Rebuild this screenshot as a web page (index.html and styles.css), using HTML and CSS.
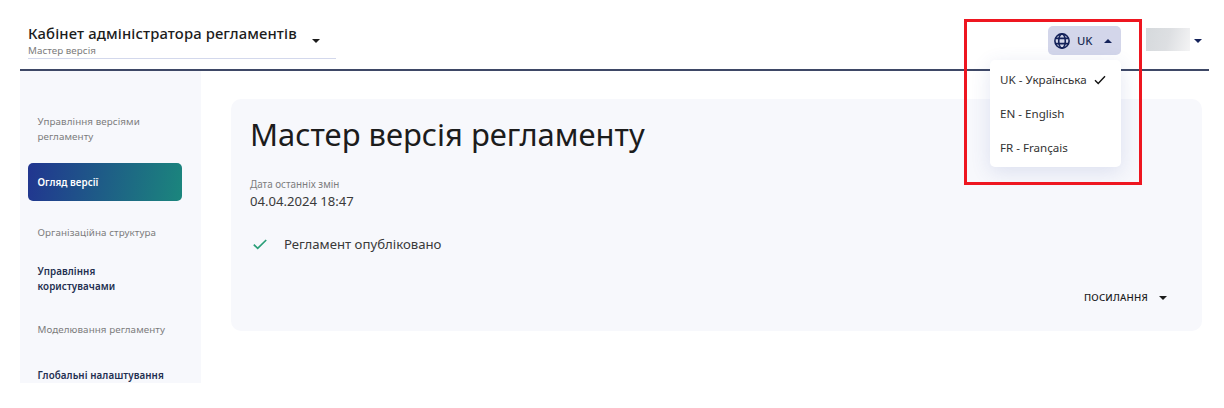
FILE: index.html
```html
<!DOCTYPE html>
<html lang="uk">
<head>
<meta charset="utf-8">
<title>Кабінет адміністратора регламентів</title>
<link rel="stylesheet" href="styles.css">
</head>
<body>
<div class="app">
  <header class="header">
    <div class="cabinet">
      <div class="cabinet-text">
        <div class="cabinet-title">Кабінет адміністратора регламентів</div>
        <div class="cabinet-version">Мастер версія</div>
      </div>
      <svg class="caret" viewBox="0 0 8 4"><path d="M0 0h8L4 4z"/></svg>
    </div>
    <div class="header-actions">
      <div class="language">
        <button class="language-button">
          <svg class="globe" viewBox="0 0 16 16"><circle cx="8" cy="8" r="7.1"/><ellipse cx="8" cy="8" rx="3.3" ry="7.1"/><path d="M1.4 5.4h13.2M1.4 10.6h13.2"/></svg>
          <span class="language-code">UK</span>
          <svg class="caret" viewBox="0 0 8 4"><path d="M0 4h8L4 0z"/></svg>
        </button>
        <ul class="language-menu">
          <li><span>UK - Українська</span><svg class="menu-check" viewBox="0 0 12 10"><path d="M1 5.2l3.2 3.2L11 1.2"/></svg></li>
          <li><span>EN - English</span></li>
          <li><span>FR - Français</span></li>
        </ul>
        <div class="highlight"></div>
      </div>
      <div class="user">
        <span class="user-name"></span>
        <svg class="caret" viewBox="0 0 8 4"><path d="M0 0h8L4 4z"/></svg>
      </div>
    </div>
  </header>
  <div class="body">
    <nav class="sidebar">
      <div class="group group-first">Управління версіями регламенту</div>
      <a class="item item-active">Огляд версії</a>
      <div class="group group-structure">Організаційна структура</div>
      <a class="item item-users">Управління користувачами</a>
      <div class="group group-modeling">Моделювання регламенту</div>
      <a class="item item-global">Глобальні налаштування</a>
    </nav>
    <main class="card">
      <h1 class="title">Мастер версія регламенту</h1>
      <div class="date-label">Дата останніх змін</div>
      <div class="date-value">04.04.2024 18:47</div>
      <div class="status">
        <svg class="status-check" viewBox="0 0 14 11"><path d="M.8 5.6l3.9 3.8L13.2 1"/></svg>
        <span class="status-text">Регламент опубліковано</span>
      </div>
      <div class="links">
        <span class="links-text">ПОСИЛАННЯ</span>
        <svg class="caret" viewBox="0 0 8 4"><path d="M0 0h8L4 4z"/></svg>
      </div>
    </main>
  </div>
</div>
</body>
</html>
```
FILE: styles.css
```css
* { box-sizing: border-box; }
body { margin: 0; background: #fff; font-family: "Noto Sans", "Open Sans", sans-serif; color: #1c1c1c; }
.app { width: 1189px; height: 383px; margin-left: 20px; display: flex; flex-direction: column; }
.caret { width: 8px; height: 4px; fill: currentColor; flex: none; }
.header { height: 71px; flex: none; display: flex; justify-content: space-between; padding: 24px 7px 0 8px; border-bottom: 2px solid #3e4866; }
.cabinet { display: flex; justify-content: space-between; width: 308px; height: 35px; padding-right: 16px; border-bottom: 1px solid #d3d8ec; }
.cabinet .caret { margin-top: 15px; }
.cabinet-title { font-size: 14.8px; font-weight: 500; letter-spacing: .13px; line-height: 19px; white-space: nowrap; }
.cabinet-version { margin-top: 1px; font-size: 9.8px; letter-spacing: .04px; line-height: 14px; color: #7c7c7c; }
.header-actions { display: flex; margin-top: 2px; color: #14225a; }
.language { position: relative; width: 73px; height: 29px; margin-right: 25px; }
.language-button { display: flex; align-items: center; width: 73px; height: 29px; padding: 0 9px 0 6px; border: 0; border-radius: 5px; background: #d3d6ea; font-family: inherit; color: #14225a; }
.globe { width: 16px; height: 16px; fill: none; stroke: currentColor; stroke-width: 1.6; }
.language-code { font-size: 11.3px; font-weight: 500; line-height: 16px; margin: 1px auto 0 7px; color: #222e56; }
.language-menu { position: absolute; z-index: 2; top: 34px; right: 0; width: 131px; height: 107px; margin: 0; padding: 3px 0 0 10px; list-style: none; background: #fff; border-radius: 5px; box-shadow: 0 5px 20px rgba(60, 80, 160, .14); color: #333; }
.language-menu li { display: flex; align-items: center; height: 34px; font-size: 11.6px; line-height: 16px; white-space: nowrap; }
.menu-check { width: 12px; height: 10px; margin-left: 7px; fill: none; stroke: #111; stroke-width: 1.4; }
.highlight { position: absolute; z-index: 3; left: -84px; top: -7px; width: 178px; height: 166px; border: 3px solid #ee1620; }
.user { display: flex; }
.user-name { width: 44px; height: 23px; margin: 2px 4px 0 0; background: linear-gradient(105deg, #d5d9dc, #dddfe2 50%, #f4f4f5); }
.user .caret { margin-top: 13px; }
.body { flex: 1; min-height: 0; display: flex; align-items: flex-start; }
.sidebar { width: 181px; height: 312px; padding: 44px 19px 0 8px; background: #f7f8fc; overflow: hidden; font-size: 9.8px; letter-spacing: .08px; line-height: 14.5px; }
.group { padding-left: 9.5px; color: #7c7c7c; }
.item { display: block; padding-left: 9.5px; font-weight: 600; color: #232f50; }
.item-active { height: 38px; margin-top: 19px; letter-spacing: .05px; line-height: 39px; border-radius: 5px; background: linear-gradient(100deg, #213590, #1b867d); color: #fff; }
.group-structure { margin-top: 25px; }
.item-users { width: 110px; margin-top: 23px; line-height: 15px; }
.group-modeling { margin-top: 29px; }
.item-global { margin-top: 32px; }
.card { width: 971px; height: 232px; margin: 28px 0 0 30px; padding: 13px 35px 0 19px; border-radius: 10px; background: #f7f8fc; }
.title { margin: 0; font-size: 30.95px; font-weight: 400; line-height: 44px; }
.date-label { margin-top: 21px; font-size: 9.9px; line-height: 14px; color: #7c7c7c; }
.date-value { margin-top: 1px; font-size: 13.1px; line-height: 18px; color: #3a3a3a; }
.status { display: flex; align-items: center; height: 18px; margin-top: 25px; padding-left: 3px; }
.status-check { width: 14px; height: 11px; margin-right: 17px; fill: none; stroke: #2a9f78; stroke-width: 1.7; }
.status-text { font-size: 13.2px; line-height: 18px; color: #3a3a3a; }
.links { display: flex; align-items: center; justify-content: flex-end; height: 14px; margin-top: 38px; }
.links-text { margin-right: 11px; font-size: 9.7px; font-weight: 500; letter-spacing: .2px; line-height: 14px; }
```
